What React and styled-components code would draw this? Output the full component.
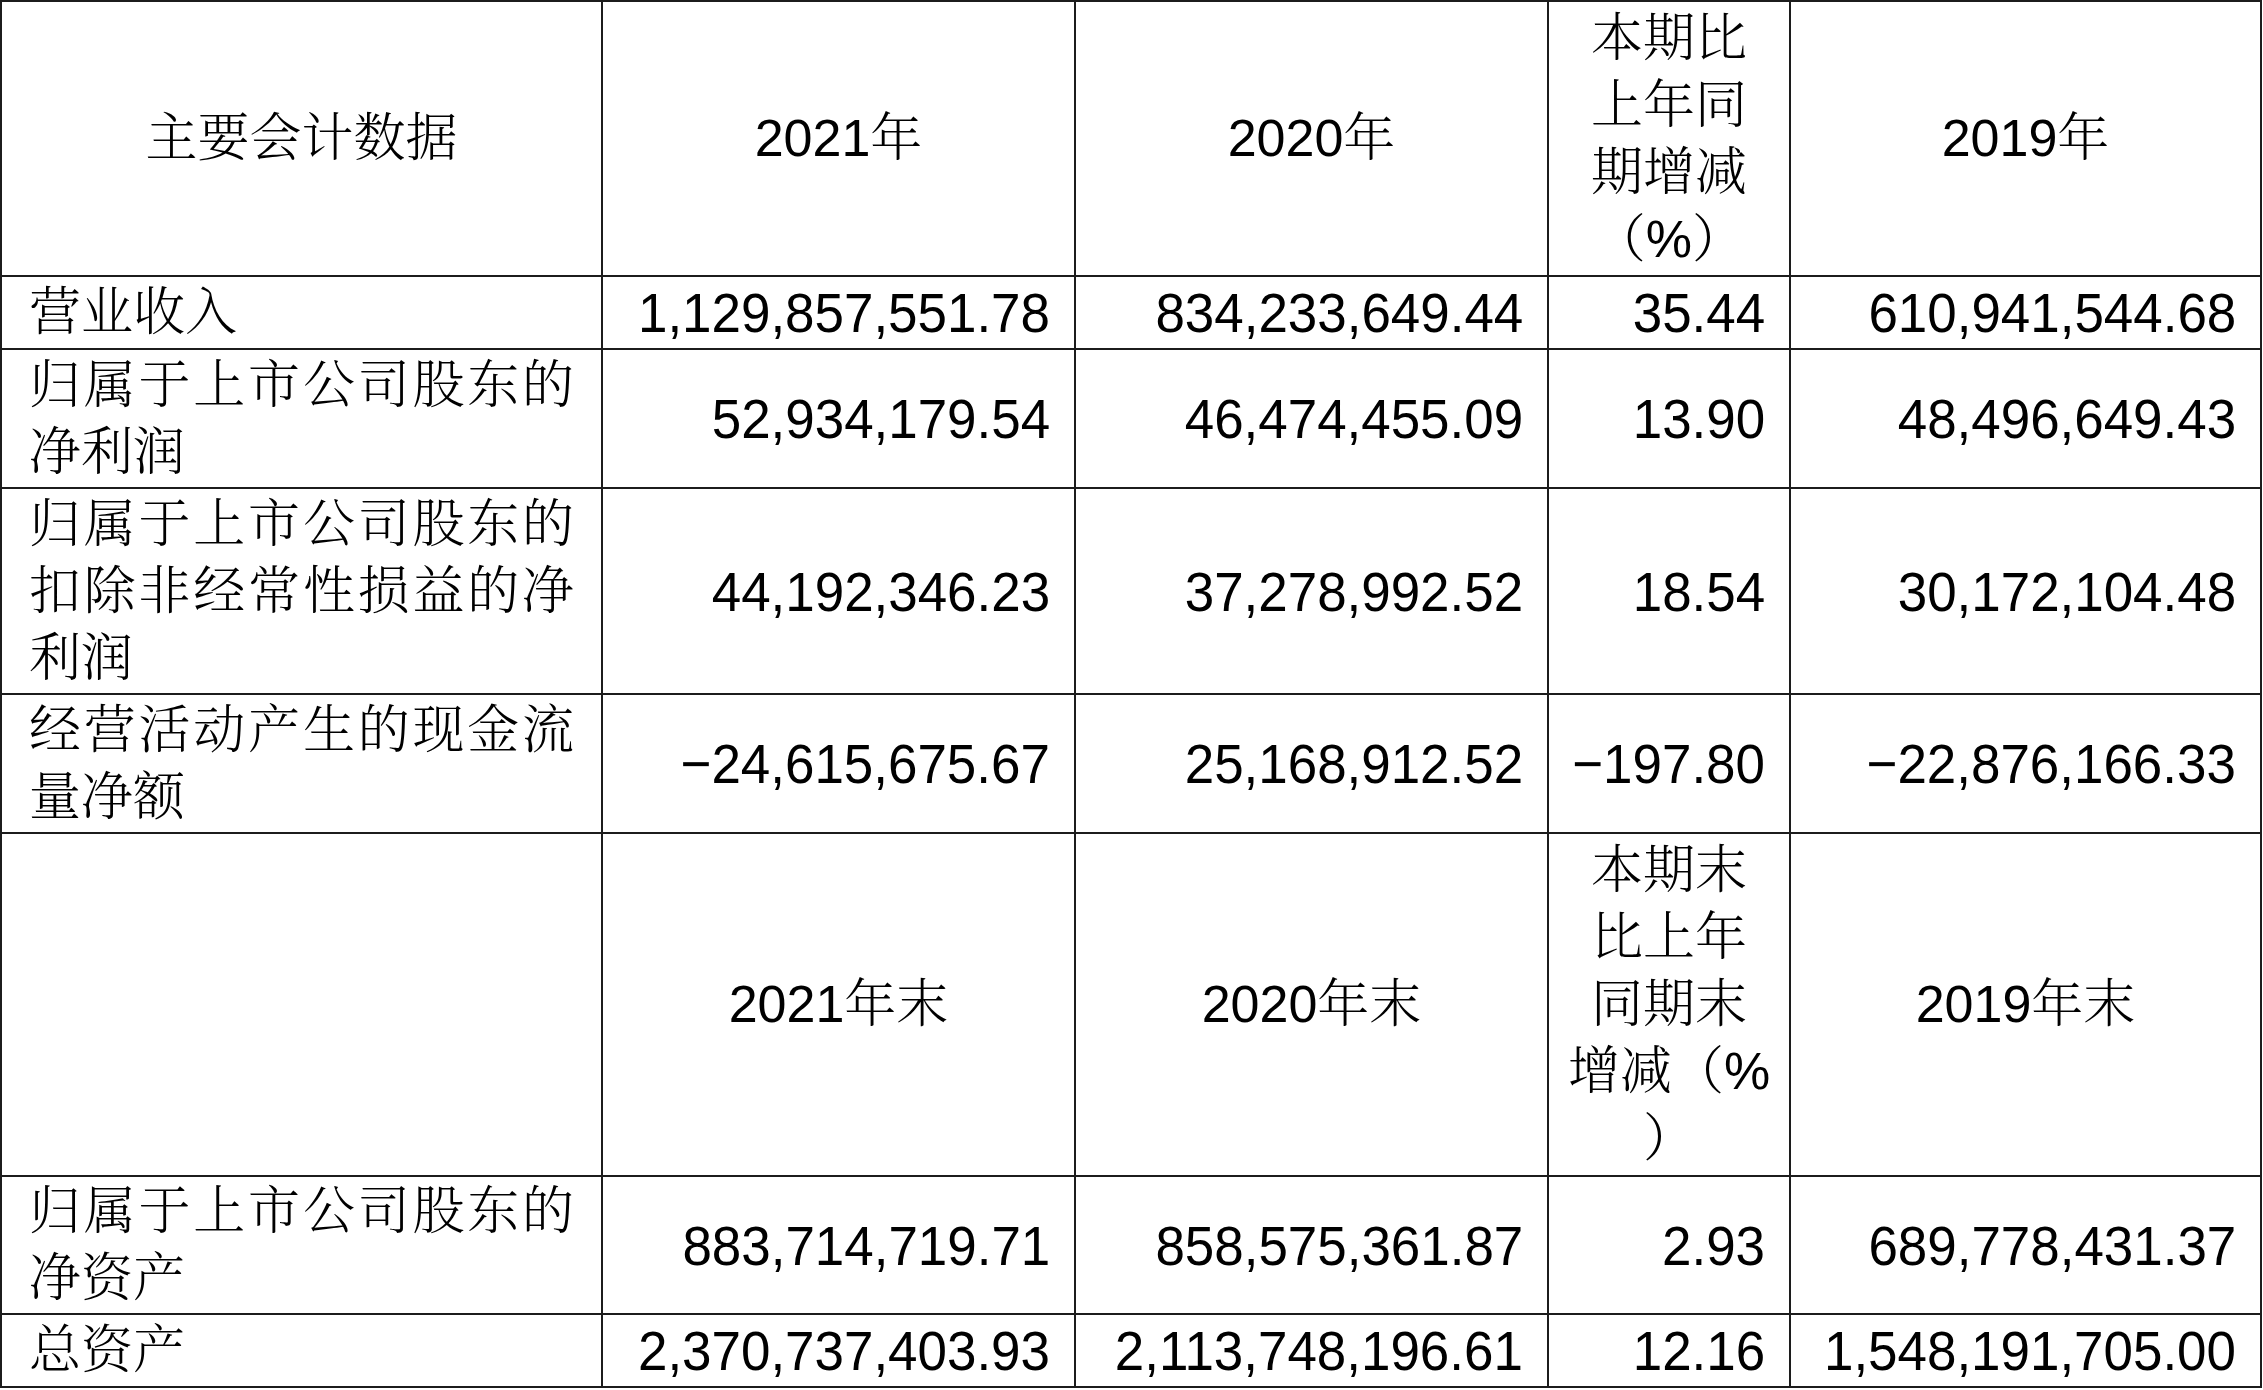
import React from 'react';
import styled, { createGlobalStyle } from 'styled-components';

const GlobalStyle = createGlobalStyle`
  body {
    margin: 0;
    background: #ffffff;
  }
`;

const LINE = '#1c1c1c';

const Table = styled.div`
  display: grid;
  grid-template-columns: 601px 473px 473px 242px 471px;
  grid-template-rows: 275px 73px 139px 206px 139px 343px 138px 73px;
  width: max-content;
  border-top: 2px solid ${LINE};
  border-left: 2px solid ${LINE};
  font-family: "Liberation Sans", "Noto Serif CJK SC", "Noto Sans CJK SC", sans-serif;
  font-weight: 300;
  color: #000;
`;

const Cell = styled.div`
  box-sizing: border-box;
  border-right: 2px solid ${LINE};
  border-bottom: 2px solid ${LINE};
  display: flex;
  align-items: center;
  overflow: hidden;
  font-size: 52px;
  line-height: 67px;
`;

const HeadCell = styled(Cell)`
  justify-content: center;
  text-align: center;
  white-space: nowrap;
`;

const LabelCell = styled(Cell)`
  justify-content: flex-start;
  padding-left: 27px;
`;

const LabelText = styled.div`
  width: 545px;
  text-align: justify;
  text-justify: inter-character;
  word-break: break-all;
`;

const NumCell = styled(Cell)`
  justify-content: flex-end;
  padding-right: 24px;
  white-space: nowrap;
`;

const Num = styled.span`
  display: inline-block;
  font-size: 56px;
  transform: scaleX(0.945);
  transform-origin: right center;
`;

const Lines = styled.div`
  display: flex;
  flex-direction: column;
  align-items: center;
`;

const Line = styled.span`
  display: block;
`;

const topHeader = [
  ['主要会计数据'],
  ['2021年'],
  ['2020年'],
  ['本期比', '上年同', '期增减', '（%）'],
  ['2019年'],
];

const midHeader = [
  [],
  ['2021年末'],
  ['2020年末'],
  ['本期末', '比上年', '同期末', '增减（%', '）'],
  ['2019年末'],
];

const flowRows = [
  {
    label: '营业收入',
    values: ['1,129,857,551.78', '834,233,649.44', '35.44', '610,941,544.68'],
  },
  {
    label: '归属于上市公司股东的净利润',
    values: ['52,934,179.54', '46,474,455.09', '13.90', '48,496,649.43'],
  },
  {
    label: '归属于上市公司股东的扣除非经常性损益的净利润',
    values: ['44,192,346.23', '37,278,992.52', '18.54', '30,172,104.48'],
  },
  {
    label: '经营活动产生的现金流量净额',
    values: ['−24,615,675.67', '25,168,912.52', '−197.80', '−22,876,166.33'],
  },
];

const stockRows = [
  {
    label: '归属于上市公司股东的净资产',
    values: ['883,714,719.71', '858,575,361.87', '2.93', '689,778,431.37'],
  },
  {
    label: '总资产',
    values: ['2,370,737,403.93', '2,113,748,196.61', '12.16', '1,548,191,705.00'],
  },
];

const HeaderRow = ({ cells }) =>
  cells.map((lines, i) => (
    <HeadCell key={i}>
      <Lines>
        {lines.map((t) => (
          <Line key={t}>{t}</Line>
        ))}
      </Lines>
    </HeadCell>
  ));

const DataRow = ({ label, values }) => (
  <>
    <LabelCell>
      <LabelText>{label}</LabelText>
    </LabelCell>
    {values.map((v, i) => (
      <NumCell key={i}>
        <Num>{v}</Num>
      </NumCell>
    ))}
  </>
);

export default function App() {
  return (
    <>
      <GlobalStyle />
      <Table>
        <HeaderRow cells={topHeader} />
        {flowRows.map((r) => (
          <DataRow key={r.label} {...r} />
        ))}
        <HeaderRow cells={midHeader} />
        {stockRows.map((r) => (
          <DataRow key={r.label} {...r} />
        ))}
      </Table>
    </>
  );
}
